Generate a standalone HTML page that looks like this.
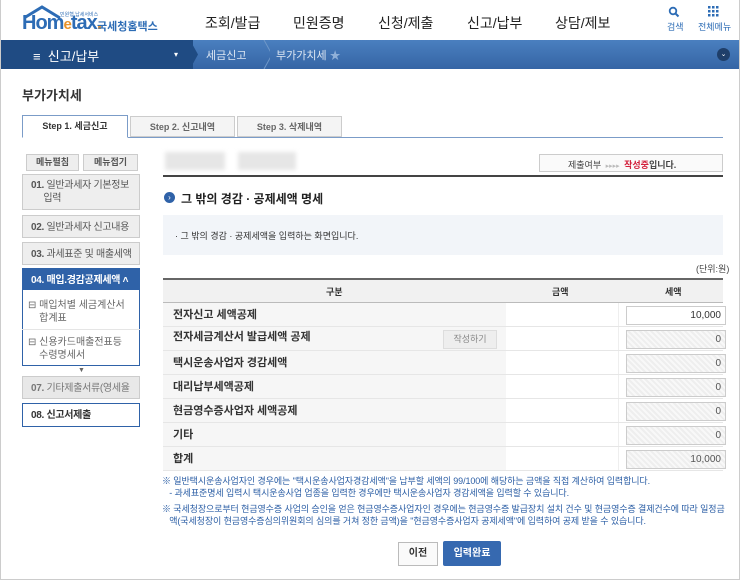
<!DOCTYPE html>
<html><head><meta charset="utf-8"><style>
*{box-sizing:border-box;margin:0;padding:0}
body{width:740px;height:580px;overflow:hidden;background:#fff;font-family:"Liberation Sans","Noto Sans CJK KR",sans-serif;position:relative;color:#333}
.frame{position:absolute;left:0;top:0;width:740px;height:580px;border:1px solid #ccc;border-top:none}
.a{position:absolute}
.nav{font-size:14px;color:#222;top:13px}
.side{position:absolute;left:22px;width:118px;border:1px solid #ccc;background:#eee;font-size:10px;color:#555;padding:4px 8px;line-height:13px;white-space:nowrap;overflow:hidden;letter-spacing:-0.3px}
.row{position:absolute;left:163px;width:560px;height:24px;border-bottom:1px solid #e6e6e6}
.row .lb{position:absolute;left:0;top:0;width:343px;height:100%;background:#f6f6f6;font-size:11px;font-weight:bold;color:#333;padding:0 10px;line-height:24px}
.row .amt{position:absolute;left:343px;width:113px;height:100%;background:#fff;border-right:1px solid #eee}
.row .inp{position:absolute;left:463px;top:3px;width:100px;height:19px;border:1px solid #ccc;background:repeating-linear-gradient(45deg,#eee 0 2px,#f8f8f8 2px 4px);font-size:10px;text-align:right;padding:3px 4px;color:#555}
.note{font-size:9px;color:#2b5ea5;line-height:12px;white-space:nowrap;letter-spacing:-0.1px}
</style></head><body>
<div class="frame"></div>
<svg class="a" style="left:22px;top:4px" width="40" height="16"><path d="M2 14 L20 3 L38 14" fill="none" stroke="#2d6cb5" stroke-width="3"/></svg>
<div class="a" style="left:60px;top:11px;font-size:5px;color:#2d6cb5">민원형 납세서비스</div>
<div class="a" style="left:22px;top:12px;font-size:20px;font-weight:bold;color:#2d6cb5;letter-spacing:-1px">Ho<span>m</span><span style="color:#e8922a;font-size:15px">e</span>tax<span style="color:#e8922a">.</span></div>
<div class="a" style="left:97px;top:18px;font-size:11px;color:#2d6cb5;font-weight:bold">국세청홈택스</div>
<div class="a nav" style="left:205px">조회/발급</div>
<div class="a nav" style="left:293px">민원증명</div>
<div class="a nav" style="left:378px">신청/제출</div>
<div class="a nav" style="left:467px">신고/납부</div>
<div class="a nav" style="left:555px">상담/제보</div>
<svg class="a" style="left:668px;top:6px" width="12" height="12"><circle cx="5" cy="5" r="3.3" fill="none" stroke="#2d6cb5" stroke-width="1.8"/><path d="M7.5 7.5 L10.5 10.5" stroke="#2d6cb5" stroke-width="2"/></svg>
<div class="a" style="left:667px;top:20px;font-size:9px;color:#2d6cb5">검색</div>
<svg class="a" style="left:708px;top:6px" width="11" height="11" fill="#2d6cb5"><rect x="0" y="0" width="2.5" height="2.5"/><rect x="4" y="0" width="2.5" height="2.5"/><rect x="8" y="0" width="2.5" height="2.5"/><rect x="0" y="4" width="2.5" height="2.5"/><rect x="4" y="4" width="2.5" height="2.5"/><rect x="8" y="4" width="2.5" height="2.5"/><rect x="0" y="8" width="2.5" height="2.5"/><rect x="4" y="8" width="2.5" height="2.5"/><rect x="8" y="8" width="2.5" height="2.5"/></svg>
<div class="a" style="left:698px;top:20px;font-size:9px;color:#2d6cb5">전체메뉴</div>
<div class="a" style="left:1px;top:40px;width:738px;height:29px;background:linear-gradient(#4a7fbf,#3565a5)"></div>
<div class="a" style="left:1px;top:40px;width:192px;height:29px;background:#1f4b83"></div>
<svg class="a" style="left:190px;top:40px" width="80" height="29"><path d="M0 0 L8 14.5 L0 29 Z" fill="#1f4b83"/><path d="M74 0 L82 14.5 L74 29" fill="none" stroke="#6e97c8"/></svg>
<div class="a" style="left:33px;top:46px;font-size:13px;color:#fff">≡ &nbsp;신고/납부</div>
<div class="a" style="left:174px;top:50px;font-size:8px;color:#fff">▾</div>
<div class="a" style="left:206px;top:47px;font-size:11px;color:#dde7f3">세금신고</div>
<div class="a" style="left:276px;top:47px;font-size:11px;color:#dde7f3">부가가치세 <span style="color:#8fb0d8">★</span></div>
<div class="a" style="left:717px;top:48px;width:13px;height:13px;border-radius:50%;background:#1f3f6a;color:#fff;font-size:7px;text-align:center;line-height:13px">⌄</div>
<div class="a" style="left:22px;top:85px;font-size:13px;font-weight:bold;color:#333">부가가치세</div>
<div class="a" style="left:22px;top:137px;width:701px;height:1px;background:#7b9cc8"></div>
<div class="a" style="left:22px;top:115px;width:106px;height:23px;border:1px solid #7b9cc8;border-bottom:1px solid #fff;background:#fff;font-size:9px;font-weight:bold;text-align:center;line-height:21px;color:#333">Step 1. 세금신고</div>
<div class="a" style="left:130px;top:116px;width:105px;height:21px;border:1px solid #ccc;background:#f4f4f4;font-size:9px;font-weight:bold;text-align:center;line-height:20px;color:#666">Step 2. 신고내역</div>
<div class="a" style="left:237px;top:116px;width:105px;height:21px;border:1px solid #ccc;background:#f4f4f4;font-size:9px;font-weight:bold;text-align:center;line-height:20px;color:#666">Step 3. 삭제내역</div>
<div class="a" style="left:26px;top:154px;width:53px;height:17px;border:1px solid #ccc;background:#eee;font-size:9px;font-weight:bold;text-align:center;line-height:15px;color:#555">메뉴펼침</div>
<div class="a" style="left:83px;top:154px;width:55px;height:17px;border:1px solid #ccc;background:#eee;font-size:9px;font-weight:bold;text-align:center;line-height:15px;color:#555">메뉴접기</div>
<div class="side" style="top:174px;height:36px"><b>01.</b> 일반과세자 기본정보<br>&nbsp;&nbsp;&nbsp;&nbsp;&nbsp;입력</div>
<div class="side" style="top:215px;height:23px;padding-top:5px"><b>02.</b> 일반과세자 신고내용</div>
<div class="side" style="top:242px;height:23px;padding-top:5px"><b>03.</b> 과세표준 및 매출세액</div>
<div class="side" style="top:268px;height:22px;background:#2f62a8;border-color:#2f62a8;color:#fff;font-weight:bold;padding-top:5px">04. 매입.경감공제세액 ˄</div>
<div class="a" style="left:22px;top:290px;width:118px;height:76px;border:1px solid #2f62a8;border-top:none;background:#fff"></div>
<div class="a" style="left:22px;top:329px;width:118px;height:1px;background:#e5e5e5"></div>
<div class="a" style="left:28px;top:299px;font-size:10px;color:#666;line-height:13px">⊟ 매입처별 세금계산서<br>&nbsp;&nbsp;&nbsp;&nbsp;합계표</div>
<div class="a" style="left:28px;top:336px;font-size:10px;color:#666;line-height:13px">⊟ 신용카드매출전표등<br>&nbsp;&nbsp;&nbsp;&nbsp;수령명세서</div>
<div class="a" style="left:78px;top:367px;font-size:7px;color:#666">▼</div>
<div class="side" style="top:376px;height:23px;padding-top:5px;background:#e8e8e8;color:#777"><b>07.</b> 기타제출서류(영세율</div>
<div class="side" style="top:403px;height:24px;background:#fff;border-color:#2f62a8;font-weight:bold;color:#333;padding-top:5px">08. 신고서제출</div>
<div class="a" style="left:165px;top:152px;width:60px;height:18px;background:#e6e6e6;filter:blur(2px)"></div>
<div class="a" style="left:238px;top:152px;width:58px;height:18px;background:#e6e6e6;filter:blur(2px)"></div>
<div class="a" style="left:539px;top:154px;width:184px;height:18px;border:1px solid #ccc;background:#fafafa;font-size:9px;color:#444;padding:3px 0 0 28px">제출여부 <span style="color:#bbb;font-size:7px">&nbsp;▸▸▸▸&nbsp;</span> <b style="color:#d3203b">작성중</b><b>입니다.</b></div>
<div class="a" style="left:163px;top:175px;width:560px;height:2px;background:#444"></div>
<div class="a" style="left:164px;top:192px;width:11px;height:11px;border-radius:50%;background:#2f62a8;color:#fff;font-size:8px;text-align:center;line-height:11px">›</div>
<div class="a" style="left:181px;top:190px;font-size:12px;font-weight:bold;color:#222">그 밖의 경감 · 공제세액 명세</div>
<div class="a" style="left:163px;top:215px;width:560px;height:40px;background:#f2f5f9"></div>
<div class="a" style="left:175px;top:229px;font-size:9px;color:#333">· 그 밖의 경감 · 공제세액을 입력하는 화면입니다.</div>
<div class="a" style="left:696px;top:262px;font-size:9px;color:#444">(단위:원)</div>
<div class="a" style="left:163px;top:278px;width:560px;height:25px;background:#f1f1f1;border-top:2px solid #666;border-bottom:1px solid #bbb"></div>
<div class="a" style="left:326px;top:285px;font-size:9px;font-weight:bold;color:#333">구분</div>
<div class="a" style="left:552px;top:285px;font-size:9px;font-weight:bold;color:#333">금액</div>
<div class="a" style="left:665px;top:285px;font-size:9px;font-weight:bold;color:#333">세액</div>
<div class="row" style="top:303px"><div class="lb">전자신고 세액공제</div><div class="amt"></div><div class="inp" style="background:#fff;color:#333">10,000</div></div>
<div class="row" style="top:327px"><div class="lb" style="line-height:20px">전자세금계산서 발급세액 공제</div><div class="amt"></div><div class="a" style="left:280px;top:3px;width:54px;height:19px;border:1px solid #ddd;background:#eee;font-size:9px;color:#888;text-align:center;line-height:17px">작성하기</div><div class="inp">0</div></div>
<div class="row" style="top:351px"><div class="lb">택시운송사업자 경감세액</div><div class="amt"></div><div class="inp">0</div></div>
<div class="row" style="top:375px"><div class="lb">대리납부세액공제</div><div class="amt"></div><div class="inp">0</div></div>
<div class="row" style="top:399px"><div class="lb">현금영수증사업자 세액공제</div><div class="amt"></div><div class="inp">0</div></div>
<div class="row" style="top:423px"><div class="lb">기타</div><div class="amt"></div><div class="inp">0</div></div>
<div class="row" style="top:447px"><div class="lb">합계</div><div class="amt"></div><div class="inp">10,000</div></div>
<div class="a note" style="left:162px;top:475px">※ 일반택시운송사업자인 경우에는 "택시운송사업자경감세액"을 납부할 세액의 99/100에 해당하는 금액을 직접 계산하여 입력합니다.<br>&nbsp;&nbsp;&nbsp;- 과세표준명세 입력시 택시운송사업 업종을 입력한 경우에만 택시운송사업자 경감세액을 입력할 수 있습니다.</div>
<div class="a note" style="left:162px;top:503px">※ 국세청장으로부터 현금영수증 사업의 승인을 얻은 현금영수증사업자인 경우에는 현금영수증 발급장치 설치 건수 및 현금영수증 결제건수에 따라 일정금<br>&nbsp;&nbsp;&nbsp;액(국세청장이 현금영수증심의위원회의 심의를 거쳐 정한 금액)을 "현금영수증사업자 공제세액"에 입력하여 공제 받을 수 있습니다.</div>
<div class="a" style="left:398px;top:542px;width:40px;height:24px;border:1px solid #bbb;background:#fafafa;font-size:10px;font-weight:bold;text-align:center;line-height:22px;color:#333">이전</div>
<div class="a" style="left:443px;top:541px;width:58px;height:25px;background:#3669b0;border-radius:2px;font-size:10px;font-weight:bold;text-align:center;line-height:25px;color:#fff">입력완료</div>
</body></html>
